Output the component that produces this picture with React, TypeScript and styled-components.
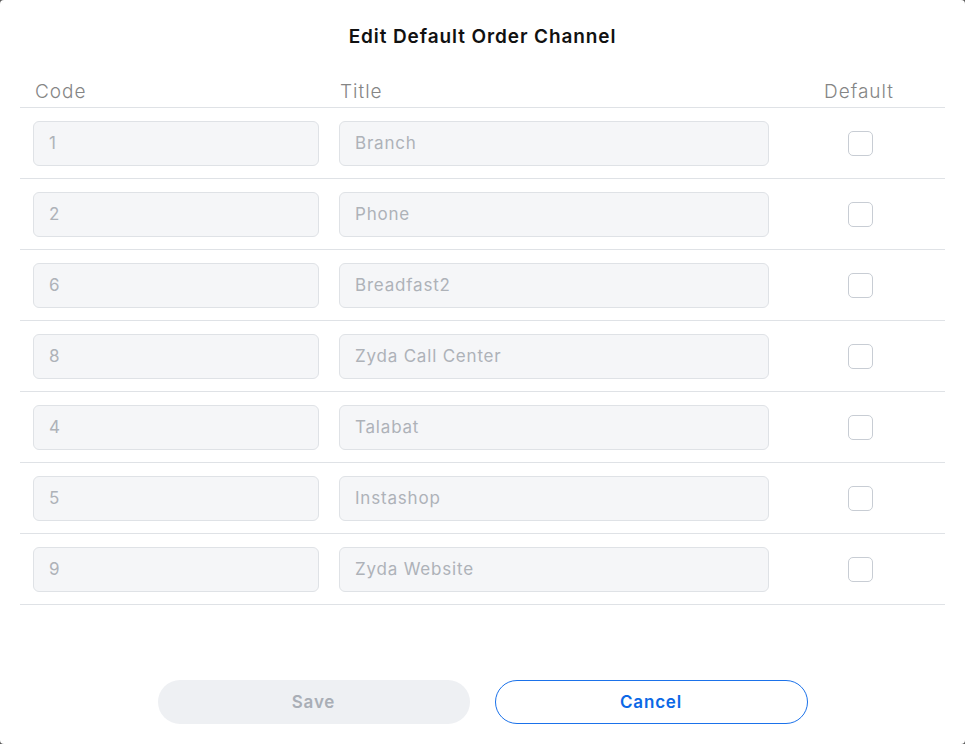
import styled, { createGlobalStyle } from "styled-components";

const channels = [
  { code: "1", title: "Branch" },
  { code: "2", title: "Phone" },
  { code: "6", title: "Breadfast2" },
  { code: "8", title: "Zyda Call Center" },
  { code: "4", title: "Talabat" },
  { code: "5", title: "Instashop" },
  { code: "9", title: "Zyda Website" },
];

const GlobalStyle = createGlobalStyle`
  html, body {
    margin: 0;
    padding: 0;
    background: #5a5a5a;
    font-family: Inter, "Noto Sans", sans-serif;
  }
`;

export default function App() {
  return (
    <>
      <GlobalStyle />
      <Modal>
        <Heading>Edit Default Order Channel</Heading>

        <Table>
          <HeaderRow>
            <HeaderCell $pad={15}>Code</HeaderCell>
            <HeaderCell $pad={11}>Title</HeaderCell>
            <HeaderCell $center>Default</HeaderCell>
          </HeaderRow>

          {channels.map(ch => (
            <Row key={ch.code}>
              <Cell $pad={13}>
                <FieldInput placeholder={ch.code} disabled />
              </Cell>
              <Cell $pad={10}>
                <FieldInput placeholder={ch.title} disabled />
              </Cell>
              <Cell $center>
                <Checkbox type="checkbox" />
              </Cell>
            </Row>
          ))}
        </Table>

        <Actions>
          <SaveButton disabled>Save</SaveButton>
          <CancelButton>Cancel</CancelButton>
        </Actions>
      </Modal>
    </>
  );
}

const Modal = styled.div`
  box-sizing: border-box;
  width: 965px;
  height: 744px;
  background: #fff;
  border-radius: 4px;
  padding: 25px 20px 20px;
  display: flex;
  flex-direction: column;
`;

const Heading = styled.h2`
  margin: 0;
  text-align: center;
  font-size: 19px;
  line-height: 24px;
  font-weight: 600;
  letter-spacing: 0.9px;
  color: #111;
`;

const Table = styled.div`
  margin-top: 21px;
  flex: 1;
`;

const gridColumns = `309px 450px 1fr`;

const HeaderRow = styled.div`
  display: grid;
  grid-template-columns: ${gridColumns};
  align-items: end;
  height: 38px;
  padding-bottom: 3px;
  box-sizing: border-box;
  border-bottom: 1px solid #dfe2e6;
`;

const HeaderCell = styled.div<{ $pad?: number; $center?: boolean }>`
  padding-left: ${p => p.$pad ?? 0}px;
  padding-right: ${p => (p.$center ? 6 : 0)}px;
  text-align: ${p => (p.$center ? "center" : "left")};
  font-size: 19px;
  line-height: 24px;
  font-weight: 300;
  letter-spacing: 1px;
  color: #858585;
`;

const Row = styled.div`
  display: grid;
  grid-template-columns: ${gridColumns};
  align-items: center;
  height: 70px;
  border-bottom: 1px solid #dfe2e6;
`;

const Cell = styled.div<{ $pad?: number; $center?: boolean }>`
  box-sizing: border-box;
  display: flex;
  justify-content: ${p => (p.$center ? "center" : "flex-start")};
  padding-left: ${p => p.$pad ?? 0}px;
  padding-right: ${p => (p.$center ? 3 : 10)}px;
`;

const FieldInput = styled.input`
  box-sizing: border-box;
  width: 100%;
  height: 45px;
  padding: 0 15px;
  border: 1px solid #dfe2e6;
  border-radius: 6px;
  background: #f5f6f8;
  font-family: inherit;
  font-size: 17px;
  letter-spacing: 0.8px;
  color: #aeb2b8;

  &::placeholder {
    color: #aeb2b8;
  }
`;

const Checkbox = styled.input`
  appearance: none;
  box-sizing: border-box;
  width: 25px;
  height: 25px;
  margin: 0;
  border: 1px solid #c8cdd4;
  border-radius: 5px;
  background: #fff;
  cursor: pointer;
`;

const Actions = styled.div`
  display: flex;
  justify-content: center;
  gap: 25px;
`;

const ButtonBase = styled.button`
  box-sizing: border-box;
  width: 312px;
  height: 44px;
  border-radius: 22px;
  font-family: inherit;
  font-size: 17px;
  font-weight: 600;
  letter-spacing: 0.8px;
`;

const SaveButton = styled(ButtonBase)`
  border: 0;
  background: #eef0f3;
  color: #a9aeb6;
  cursor: not-allowed;
`;

const CancelButton = styled(ButtonBase)`
  width: 313px;
  border: 1px solid #1b72ea;
  background: #fff;
  color: #0b68e6;
  cursor: pointer;
`;
